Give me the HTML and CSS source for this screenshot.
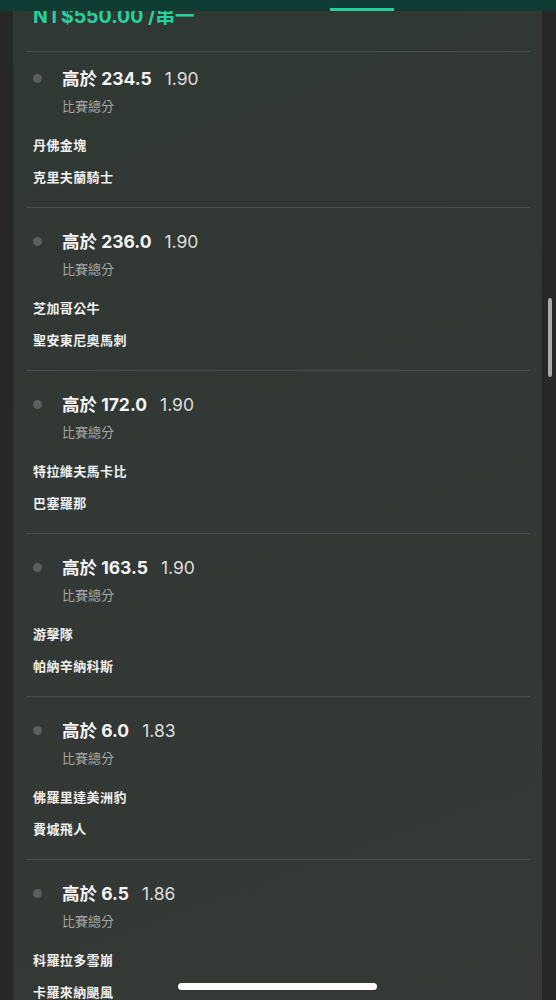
FILE: index.html
```html
<!DOCTYPE html>
<html lang="zh-Hant">
<head>
    <meta charset="UTF-8">
    <meta name="viewport" content="width=device-width, initial-scale=1.0">
    <title>串關投注</title>
    <link rel="stylesheet" href="styles.css">
</head>
<body>
    <div class="topbar">
        <span class="tab-indicator"></span>
    </div>

    <div class="card">
        <div class="card-header">
            <div class="price">NT$550.00 /串一</div>
        </div>

        <div class="bet">
            <span class="dot"></span>
            <div class="line"><b>高於 234.5</b><span class="odds">1.90</span></div>
            <div class="market">比賽總分</div>
            <div class="teams">
                <div>丹佛金塊</div>
                <div>克里夫蘭騎士</div>
            </div>
        </div>

        <div class="bet">
            <span class="dot"></span>
            <div class="line"><b>高於 236.0</b><span class="odds">1.90</span></div>
            <div class="market">比賽總分</div>
            <div class="teams">
                <div>芝加哥公牛</div>
                <div>聖安東尼奧馬刺</div>
            </div>
        </div>

        <div class="bet">
            <span class="dot"></span>
            <div class="line"><b>高於 172.0</b><span class="odds">1.90</span></div>
            <div class="market">比賽總分</div>
            <div class="teams">
                <div>特拉維夫馬卡比</div>
                <div>巴塞羅那</div>
            </div>
        </div>

        <div class="bet">
            <span class="dot"></span>
            <div class="line"><b>高於 163.5</b><span class="odds">1.90</span></div>
            <div class="market">比賽總分</div>
            <div class="teams">
                <div>游擊隊</div>
                <div>帕納辛納科斯</div>
            </div>
        </div>

        <div class="bet">
            <span class="dot"></span>
            <div class="line"><b>高於 6.0</b><span class="odds">1.83</span></div>
            <div class="market">比賽總分</div>
            <div class="teams">
                <div>佛羅里達美洲豹</div>
                <div>費城飛人</div>
            </div>
        </div>

        <div class="bet">
            <span class="dot"></span>
            <div class="line"><b>高於 6.5</b><span class="odds">1.86</span></div>
            <div class="market">比賽總分</div>
            <div class="teams">
                <div>科羅拉多雪崩</div>
                <div>卡羅來納颶風</div>
            </div>
        </div>
    </div>

    <div class="scroll-thumb"></div>
    <div class="home-indicator"></div>
</body>
</html>
```

FILE: styles.css
```css
* {
    margin: 0;
    padding: 0;
    box-sizing: border-box;
}

html, body {
    height: 100%;
    overflow: hidden;
}

body {
    font-family: Inter, 'Noto Sans CJK TC', sans-serif;
    background: #272727;
    color: #f2f2f2;
}

.topbar {
    position: fixed;
    top: 0;
    left: 0;
    right: 0;
    height: 11px;
    background: #0f3c33;
    z-index: 2;
}

.tab-indicator {
    position: absolute;
    left: 330px;
    bottom: 0;
    width: 64px;
    height: 3px;
    background: #22d3a0;
}

.card {
    margin: 0 14px 0 13px;
    padding: 0 12px 0 13px;
    background: linear-gradient(160deg, #303834 0%, #353836 100%);
    min-height: 1100px;
}

.card-header {
    padding: 4px 0 23px 7px;
    border-bottom: 1px solid #484e4b;
}

.price {
    color: #22d3a0;
    font-size: 19.5px;
    font-weight: 700;
    line-height: 24px;
}

.bet {
    display: grid;
    grid-template-columns: 9px 1fr;
    column-gap: 20px;
    padding: 22px 0 20px 7px;
    border-bottom: 1px solid #484e4b;
}

.bet:nth-child(2) {
    padding-top: 15px;
}

.dot {
    width: 9px;
    height: 9px;
    border-radius: 50%;
    background: #5b5f5d;
    align-self: center;
    margin-top: -1px;
}

.line {
    font-size: 17.5px;
    line-height: 24px;
    white-space: nowrap;
}

.line b {
    font-weight: 700;
    color: #f4f4f4;
}

.odds {
    margin-left: 13px;
    color: #dedede;
}

.market {
    grid-column: 2;
    margin-top: 5px;
    font-size: 13px;
    line-height: 20px;
    color: #a3a6a4;
}

.teams {
    grid-column: 1 / 3;
    margin-top: 19px;
    display: flex;
    flex-direction: column;
    gap: 12px;
    font-size: 13px;
    font-weight: 700;
    line-height: 20px;
    letter-spacing: 0.4px;
    color: #f0f0f0;
}

.scroll-thumb {
    position: fixed;
    left: 548px;
    top: 298px;
    width: 4px;
    height: 79px;
    border-radius: 2px;
    background: #a9a9a9;
}

.home-indicator {
    position: fixed;
    left: 178px;
    top: 983px;
    width: 199px;
    height: 7px;
    border-radius: 4px;
    background: #ffffff;
}
```
